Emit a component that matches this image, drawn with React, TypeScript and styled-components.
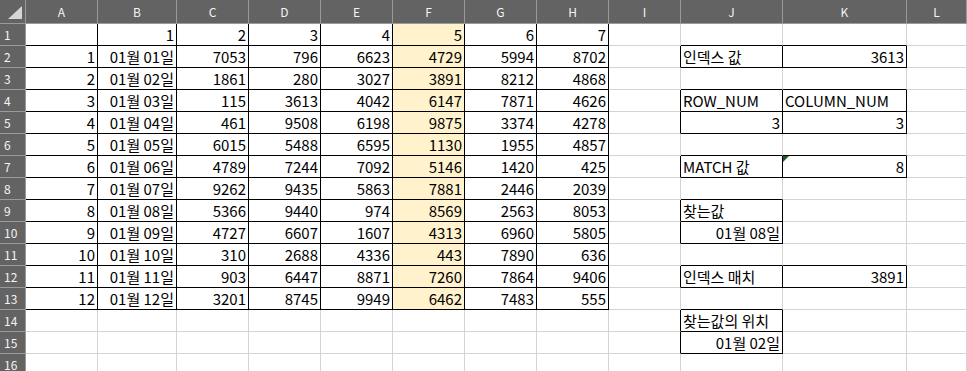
import React from 'react';
import styled, { createGlobalStyle } from 'styled-components';

const GlobalStyle = createGlobalStyle`
  html, body {
    margin: 0;
    padding: 0;
    background: #ffffff;
    overflow: hidden;
  }
  body {
    font-family: "Noto Sans CJK KR", "Noto Sans", sans-serif;
  }
`;

const COLS = ['A', 'B', 'C', 'D', 'E', 'F', 'G', 'H', 'I', 'J', 'K', 'L'];
const COL_WIDTHS = [72, 79, 72, 72, 72, 72, 72, 72, 72, 102, 124];
const ROW_COUNT = 16;

const HEAD_BG = '#636363';
const HEAD_LINE = '#9a9a9a';
const GRID_LINE = '#d4d4d4';
const HILITE = '#fff2cc';

type CellValue = { text: string; align: 'left' | 'right' };

// table body: row 2..13
const numbers: number[][] = [
  [7053, 796, 6623, 4729, 5994, 8702],
  [1861, 280, 3027, 3891, 8212, 4868],
  [115, 3613, 4042, 6147, 7871, 4626],
  [461, 9508, 6198, 9875, 3374, 4278],
  [6015, 5488, 6595, 1130, 1955, 4857],
  [4789, 7244, 7092, 5146, 1420, 425],
  [9262, 9435, 5863, 7881, 2446, 2039],
  [5366, 9440, 974, 8569, 2563, 8053],
  [4727, 6607, 1607, 4313, 6960, 5805],
  [310, 2688, 4336, 443, 7890, 636],
  [903, 6447, 8871, 7260, 7864, 9406],
  [3201, 8745, 9949, 6462, 7483, 555],
];

const pad = (n: number) => (n < 10 ? `0${n}` : `${n}`);

const cells: Record<string, CellValue> = {};
const put = (r: number, c: number, text: string, align: 'left' | 'right' = 'right') => {
  cells[`${r}:${c}`] = { text, align };
};

for (let i = 1; i <= 7; i++) put(1, i, String(i));
numbers.forEach((row, i) => {
  const r = i + 2;
  put(r, 0, String(i + 1));
  put(r, 1, `01월 ${pad(i + 1)}일`);
  row.forEach((v, j) => put(r, j + 2, String(v)));
});

put(2, 9, '인덱스 값', 'left');
put(2, 10, '3613');
put(4, 9, 'ROW_NUM', 'left');
put(4, 10, 'COLUMN_NUM', 'left');
put(5, 9, '3');
put(5, 10, '3');
put(7, 9, 'MATCH 값', 'left');
put(7, 10, '8');
put(9, 9, '찾는값', 'left');
put(10, 9, '01월 08일');
put(12, 9, '인덱스 매치', 'left');
put(12, 10, '3891');
put(14, 9, '찾는값의 위치', 'left');
put(15, 9, '01월 02일');

// ranges with all borders: [r1, r2, c1, c2]
const boxes: [number, number, number, number][] = [
  [1, 13, 0, 7],
  [2, 2, 9, 10],
  [4, 5, 9, 10],
  [7, 7, 9, 10],
  [9, 10, 9, 9],
  [12, 12, 9, 10],
  [14, 15, 9, 9],
];

const inBox = (r: number, c: number) =>
  boxes.some(([r1, r2, c1, c2]) => r >= r1 && r <= r2 && c >= c1 && c <= c2);

const Sheet = styled.div`
  display: grid;
  grid-template-columns: 26px ${COL_WIDTHS.map((w) => `${w}px`).join(' ')} 1fr;
  grid-template-rows: 24px repeat(${ROW_COUNT}, 22px);
  width: 967px;
  height: 371px;
  overflow: hidden;
`;

const Corner = styled.div`
  background: ${HEAD_BG};
  border-right: 1px solid ${HEAD_LINE};
  border-bottom: 1px solid ${HEAD_LINE};
  box-sizing: border-box;
  svg {
    display: block;
  }
`;

const ColHead = styled.div`
  box-sizing: border-box;
  background: ${HEAD_BG};
  border-right: 1px solid ${HEAD_LINE};
  border-bottom: 1px solid ${HEAD_LINE};
  color: #f4f4f4;
  font-size: 12px;
  line-height: 23px;
  text-align: center;
`;

const RowHead = styled.div`
  box-sizing: border-box;
  background: ${HEAD_BG};
  border-right: 1px solid ${HEAD_LINE};
  border-bottom: 1px solid ${HEAD_LINE};
  color: #f4f4f4;
  font-size: 12px;
  line-height: 21px;
  padding-left: 4px;
`;

const Cell = styled.div<{ $fill?: string; $align: 'left' | 'right'; $right: boolean; $bottom: boolean }>`
  position: relative;
  box-sizing: border-box;
  background: ${(p) => p.$fill ?? '#ffffff'};
  border-right: 1px solid ${(p) => (p.$right ? '#000000' : GRID_LINE)};
  border-bottom: 1px solid ${(p) => (p.$bottom ? '#000000' : GRID_LINE)};
  padding: 0 2px;
  color: #000000;
  font-size: 15px;
  line-height: 21px;
  text-align: ${(p) => p.$align};
  white-space: nowrap;
  overflow: hidden;
`;

// error indicator in the corner of a cell
const Flag = styled.span`
  position: absolute;
  left: 0;
  top: 0;
  width: 0;
  height: 0;
  border-top: 6px solid #1e5a2c;
  border-right: 6px solid transparent;
`;

export default function App() {
  const grid: React.ReactNode[] = [];

  grid.push(
    <Corner key="corner">
      <svg width="25" height="23" viewBox="0 0 25 23">
        <polygon points="22,6 22,19 8,19" fill="#d6d6d6" />
      </svg>
    </Corner>
  );
  COLS.forEach((c) => grid.push(<ColHead key={`h${c}`}>{c}</ColHead>));

  for (let r = 1; r <= ROW_COUNT; r++) {
    grid.push(<RowHead key={`r${r}`}>{r}</RowHead>);
    COLS.forEach((_, c) => {
      const v = cells[`${r}:${c}`];
      const right = inBox(r, c) || inBox(r, c + 1);
      const bottom = inBox(r, c) || inBox(r + 1, c);
      const fill = c === 5 && r <= 13 ? HILITE : undefined;
      grid.push(
        <Cell key={`${r}:${c}`} $fill={fill} $align={v?.align ?? 'right'} $right={right} $bottom={bottom}>
          {r === 7 && c === 10 && <Flag />}
          {v?.text}
        </Cell>
      );
    });
  }

  return (
    <>
      <GlobalStyle />
      <Sheet>{grid}</Sheet>
    </>
  );
}
